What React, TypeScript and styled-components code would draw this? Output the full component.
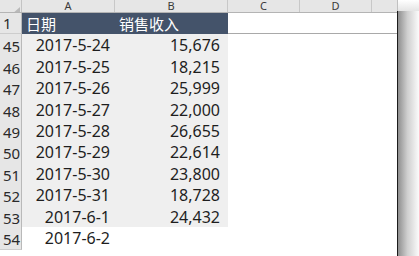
import styled, { createGlobalStyle } from 'styled-components';

interface ISaleRow {
	row: number;
	date: string;
	amount?: string;
}

const rows: ISaleRow[] = [
	{ row: 45, date: '2017-5-24', amount: '15,676' },
	{ row: 46, date: '2017-5-25', amount: '18,215' },
	{ row: 47, date: '2017-5-26', amount: '25,999' },
	{ row: 48, date: '2017-5-27', amount: '22,000' },
	{ row: 49, date: '2017-5-28', amount: '26,655' },
	{ row: 50, date: '2017-5-29', amount: '22,614' },
	{ row: 51, date: '2017-5-30', amount: '23,800' },
	{ row: 52, date: '2017-5-31', amount: '18,728' },
	{ row: 53, date: '2017-6-1', amount: '24,432' },
	{ row: 54, date: '2017-6-2' },
];

const columns = ['A', 'B', 'C', 'D', ''];

const App = () => {
	return (
		<>
			<GlobalStyle />
			<Page>
				<Sheet>
					<ColumnBar>
						<Corner>
							<svg width="22" height="12" viewBox="0 0 22 12">
								<polygon points="20,2 20,10 11,10" fill="#b9b9b9" />
							</svg>
						</Corner>
						{columns.map((col, i) => (
							<ColumnLetter key={i}>{col}</ColumnLetter>
						))}
					</ColumnBar>

					<Row>
						<RowNumber>1</RowNumber>
						<TitleCell>日期</TitleCell>
						<TitleCell>销售收入</TitleCell>
						<EmptyCell $underline />
						<EmptyCell $underline />
						<EmptyCell $underline />
					</Row>

					{rows.map((r) => (
						<Row key={r.row}>
							<RowNumber>{r.row}</RowNumber>
							<DataCell $filled={!!r.amount} $pad={5}>
								{r.date}
							</DataCell>
							<DataCell $filled={!!r.amount} $pad={8}>
								{r.amount}
							</DataCell>
							<EmptyCell />
							<EmptyCell />
							<EmptyCell />
						</Row>
					))}
				</Sheet>
				<Shadow>
					<ShadowTop />
					<ShadowBody />
				</Shadow>
			</Page>
		</>
	);
};

const GlobalStyle = createGlobalStyle`
	html, body {
		margin: 0;
		padding: 0;
		background: #ffffff;
		overflow: hidden;
	}
`;

const Page = styled.div`
	display: flex;
	width: 419px;
	height: 256px;
	overflow: hidden;
	background: #ffffff;
`;

const Sheet = styled.div`
	width: 397px;
	display: flex;
	flex-direction: column;
	font-family: 'Noto Sans', 'Noto Sans CJK SC', sans-serif;
	color: #1e1e1e;
`;

const gridColumns = '22px 93px 113px 72px 72px 25px';

const ColumnBar = styled.div`
	display: grid;
	grid-template-columns: ${gridColumns};
	height: 13px;
	flex-shrink: 0;
	background: #e6e6e6;
	border-bottom: 1px solid #b4b4b4;
	box-sizing: border-box;
`;

const Corner = styled.div`
	border-right: 1px solid #c4c4c4;
	overflow: hidden;
`;

const ColumnLetter = styled.div`
	display: flex;
	align-items: center;
	justify-content: center;
	border-right: 1px solid #c8c8c8;
	font-size: 11px;
	line-height: 12px;
	color: #3a3a3a;
	box-sizing: border-box;

	&:last-child {
		border-right: none;
	}
`;

const Row = styled.div`
	display: grid;
	grid-template-columns: ${gridColumns};
	height: 21.4px;
	flex-shrink: 0;
`;

const RowNumber = styled.div`
	display: flex;
	align-items: flex-end;
	padding: 0 0 1px 3px;
	background: #e6e6e6;
	border-right: 1px solid #b9b9b9;
	border-bottom: 1px solid #cdcdcd;
	box-sizing: border-box;
	font-size: 15px;
	line-height: 18px;
	color: #2a2a2a;
`;

const TitleCell = styled.div`
	display: flex;
	align-items: center;
	padding-left: 4px;
	background: #44536a;
	color: #ffffff;
	font-family: 'Noto Sans CJK SC', sans-serif;
	font-size: 15px;
`;

const DataCell = styled.div<{ $filled: boolean; $pad: number }>`
	display: flex;
	align-items: center;
	justify-content: flex-end;
	padding-right: ${(p) => p.$pad}px;
	background: ${(p) => (p.$filled ? '#efefef' : '#ffffff')};
	border-bottom: 1px solid ${(p) => (p.$filled ? '#f7f7f7' : '#ffffff')};
	box-sizing: border-box;
	font-size: 16px;
`;

const EmptyCell = styled.div<{ $underline?: boolean }>`
	background: #ffffff;
	border-bottom: 1px solid ${(p) => (p.$underline ? '#a9a9a9' : '#ffffff')};
	box-sizing: border-box;
`;

const Shadow = styled.div`
	width: 22px;
	display: flex;
	flex-direction: column;
`;

const ShadowTop = styled.div`
	height: 11px;
	background: linear-gradient(to bottom, #ffffff, #e4e4e4);
	border-left: 1px solid #c0c0c0;
`;

const ShadowBody = styled.div`
	flex: 1;
	border-left: 1px solid #1c1c1c;
	background: linear-gradient(to right, #8f8f8f, #cfcfcf 45%, #fbfbfb);
`;

export default App;
